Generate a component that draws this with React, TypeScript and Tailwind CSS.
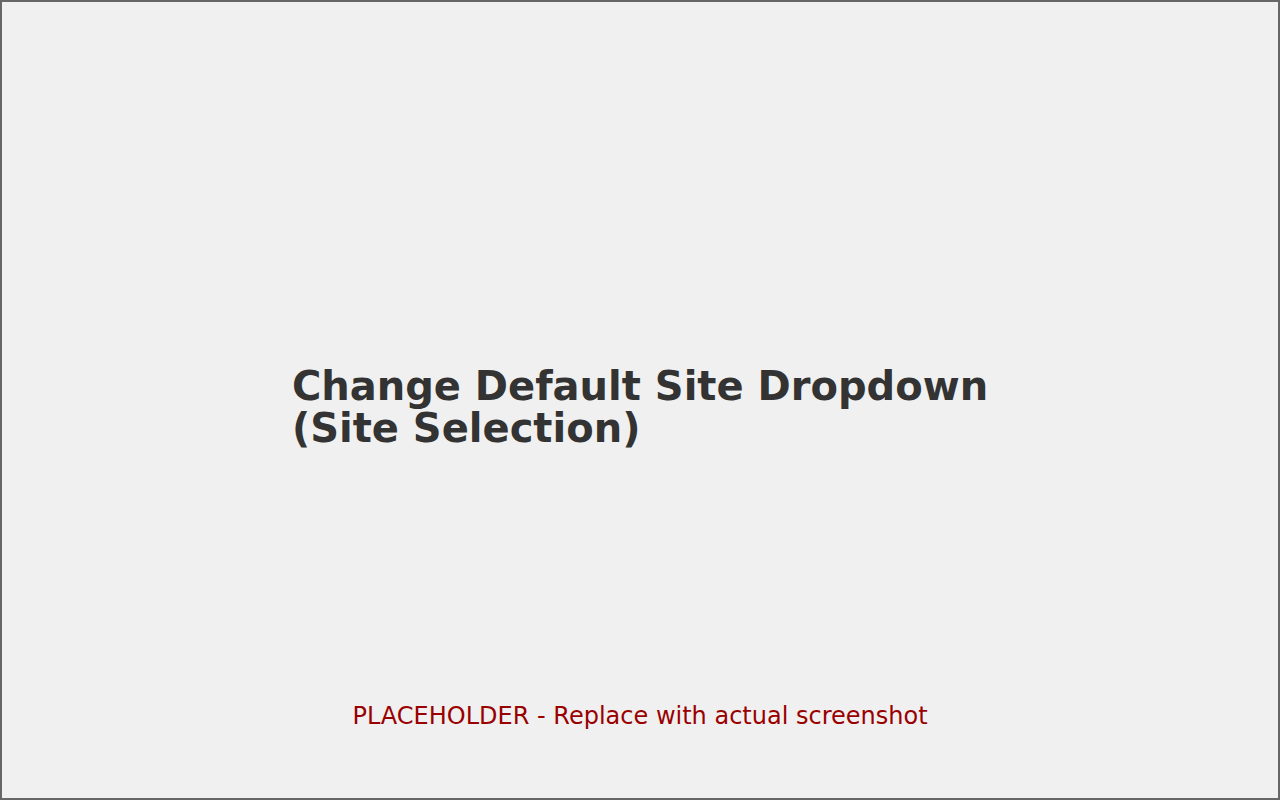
export default function App() {
  return (
    <div className="h-[800px] w-full border-2 border-[#666666] bg-[#f0f0f0] flex flex-col items-center pt-[363px] font-['DejaVu_Sans',sans-serif]">
      <div className="w-fit text-left text-[40px] font-bold leading-[42px] text-[#333333]">
        <div>Change Default Site Dropdown</div>
        <div>(Site Selection)</div>
      </div>
      <div className="mt-[253px] text-[24px] leading-[28px] text-[#990000]">
        PLACEHOLDER - Replace with actual screenshot
      </div>
    </div>
  );
}
